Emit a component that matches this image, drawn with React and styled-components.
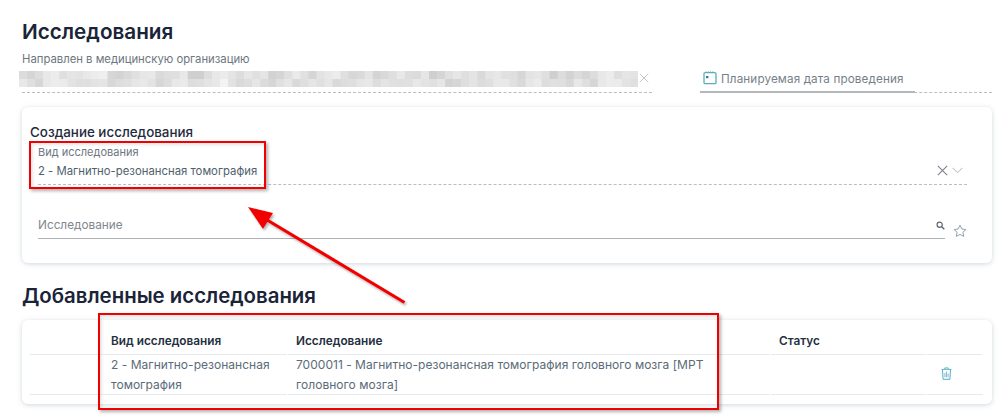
import React from 'react';
import styled, { createGlobalStyle } from 'styled-components';

const GlobalStyle = createGlobalStyle`
    html, body {
        margin: 0;
        padding: 0;
        background: #fff;
    }
    body {
        font-family: Inter, "Noto Sans", "Liberation Sans", sans-serif;
        color: #5a6b78;
    }
`;

const Page = styled.div`
    position: relative;
    box-sizing: border-box;
    width: 1004px;
    height: 419px;
    padding: 18px 12px 0 22px;
    overflow: hidden;
`;

const PageTitle = styled.h1`
    margin: 0;
    height: 27px;
    font-size: 20.7px;
    line-height: 27px;
    font-weight: 600;
    color: #1a2438;
`;

const TopRow = styled.div`
    display: flex;
    margin-top: 7px;
    height: 41px;
`;

const OrgField = styled.div`
    position: relative;
    width: 630px;
    height: 41px;
    border-bottom: 1px dashed #b9bec2;
    box-sizing: border-box;
`;

const SmallLabel = styled.div`
    font-size: ${({ $size }) => $size || 11}px;
    line-height: 14px;
    color: #6d7680;
`;

const Mosaic = styled.svg`
    display: block;
    margin: 5px 0 0 -3px;
`;

const ClearSlot = styled.span`
    position: absolute;
    right: 3px;
    top: 21px;
    display: flex;
`;

const DateField = styled.div`
    position: relative;
    box-sizing: border-box;
    margin-left: 48px;
    width: 292px;
    height: 41px;
    padding: 20px 0 0 3px;
    display: flex;
    align-items: flex-start;
    gap: 4px;
    border-bottom: 1px dashed #b9bec2;
    font-size: 11.7px;
    line-height: 14px;
    letter-spacing: 0.12px;
    color: #767f89;
`;

const DateUnderline = styled.span`
    position: absolute;
    left: 0;
    bottom: -1px;
    width: 215px;
    height: 2px;
    background: #b5b8ba;
`;

const Card = styled.section`
    box-sizing: border-box;
    width: 970px;
    background: #fff;
    border-radius: 6px;
    box-shadow: 0 1px 5px rgba(120, 140, 160, 0.35);
`;

const CreateCard = styled(Card)`
    height: 156px;
    margin-top: 14px;
    padding: 17px 25px 0 8px;
`;

const CardTitle = styled.h2`
    margin: 0;
    font-size: 13.4px;
    line-height: 17px;
    font-weight: 500;
    color: #1f2a3c;
`;

const KindField = styled.div`
    box-sizing: border-box;
    position: relative;
    height: 40px;
    margin: 4px 0 0 8px;
    border-bottom: 1px dashed #b9bec2;
`;

const FieldValue = styled.div`
    margin-top: 5px;
    font-size: 11.3px;
    line-height: 15px;
    letter-spacing: 0.02px;
    color: #4e616d;
`;

const KindIcons = styled.div`
    position: absolute;
    right: 4px;
    top: 20px;
    display: flex;
    align-items: center;
    gap: 4px;
`;

const SearchRow = styled.div`
    display: flex;
    align-items: flex-end;
    margin: 30px 0 0 8px;
`;

const SearchField = styled.div`
    box-sizing: border-box;
    position: relative;
    width: 907px;
    height: 24px;
    padding-top: 3px;
    border-bottom: 1.5px solid #adb1b4;
    font-size: 11.8px;
    line-height: 15px;
    color: #80878e;
`;

const SearchSlot = styled.span`
    position: absolute;
    right: 0;
    top: 6px;
    display: flex;
`;

const StarSlot = styled.span`
    display: flex;
    margin: 0 0 1px 8px;
`;

const SectionTitle = styled.h2`
    margin: 20px 0 0;
    height: 26px;
    font-size: 20.4px;
    line-height: 26px;
    font-weight: 600;
    color: #1a2438;
`;

const TableCard = styled(Card)`
    height: 84px;
    margin-top: 11px;
    padding: 0 9px 0 8px;
`;

const Grid = styled.div`
    display: grid;
    grid-template-columns: 73px 185px 483px 156px 56px;
`;

const HeadCell = styled.div`
    box-sizing: border-box;
    height: 35px;
    padding: 14px 8px 0;
    font-size: 11.8px;
    line-height: 15px;
    font-weight: 600;
    color: #252f40;
    border-bottom: 1px solid #e6eaed;
    margin-right: 1px;
`;

const BodyCell = styled.div`
    box-sizing: border-box;
    height: 40px;
    padding: 0 8px;
    font-size: 12px;
    line-height: 20px;
    letter-spacing: 0.02px;
    color: #5a6b78;
    border-bottom: 1px solid #e6eaed;
    margin-right: 1px;
`;

const ActionCell = styled(BodyCell)`
    display: flex;
    align-items: center;
    justify-content: flex-start;
    padding: 0 0 3px 14px;
    margin-right: 0;
`;

const Highlight = styled.div`
    position: absolute;
    box-sizing: border-box;
    left: ${({ $x }) => $x}px;
    top: ${({ $y }) => $y}px;
    width: ${({ $w }) => $w}px;
    height: ${({ $h }) => $h}px;
    border: 2px solid #f00000;
    box-shadow: 2px 2px 3px rgba(60, 60, 60, 0.4), inset 2px 2px 3px rgba(60, 60, 60, 0.12);
    pointer-events: none;
`;

const ArrowOverlay = styled.svg`
    position: absolute;
    left: 230px;
    top: 195px;
    pointer-events: none;
`;

const mosaicRows = [
    'dcd5dde8ecdfe5e3e8ecefd6d3d9e0e6e8dadedfe8cfcfdde8ebe4dde6e0e5d2d5dfeae0d5e3e8ecdfd7dae4d4d9dfe8dddbe6cfd5e0e6dfe4d9e4e7e0dfd6e3e6dfcfdcd3',
    'e8dfd6e8ecebe3dfdfe3e5d8dde0e6e8e3d6dde8eadddfe4e8f3e2d9dde6dbd6e0e6d9dfe5e0e6d9dddfe6e8dde4e0dfe0e8e3e0e6d3d6dee4dcdfe8e8e0d9e6ebdde0dfd8',
];

function MosaicBlock() {
    const cell = 8.04;
    const cols = 77;
    const cells = [];
    mosaicRows.forEach((row, r) => {
        for (let i = 0; i < cols; i++) {
            const hex = row.substr((i * 2) % row.length, 2);
            cells.push(
                <rect key={`${r}-${i}`} x={i * cell} y={r * 8} width={cell + 0.5} height={8.5} fill={`#${hex}${hex}${hex}`} />
            );
        }
    });
    return (
        <Mosaic width="619" height="16" viewBox="0 0 619 16">
            {cells}
        </Mosaic>
    );
}

function CrossIcon({ size = 11, color = '#b9bfc5', width = 1.1 }) {
    return (
        <svg width={size} height={size} viewBox="0 0 11 11" fill="none">
            <path d="M0.8 0.8 10.2 10.2M10.2 0.8 0.8 10.2" stroke={color} strokeWidth={width} />
        </svg>
    );
}

function ChevronIcon() {
    return (
        <svg width="11" height="7" viewBox="0 0 11 7" fill="none">
            <path d="M0.6 0.8 5.5 5.6 10.4 0.8" stroke="#c3c8cc" strokeWidth="1.1" />
        </svg>
    );
}

function CalendarIcon() {
    return (
        <svg width="14" height="14" viewBox="0 0 14 14" fill="none" style={{ flex: 'none', marginTop: -1 }}>
            <rect x="1" y="1.6" width="12" height="11" rx="1.2" stroke="#5fabbb" strokeWidth="1.3" />
            <path d="M2.5 1.2h9" stroke="#5fabbb" strokeWidth="1.2" strokeDasharray="1.2 1" />
            <rect x="3" y="5" width="2.4" height="2.2" fill="#2f7f95" />
        </svg>
    );
}

function SearchIcon() {
    return (
        <svg width="9" height="9" viewBox="0 0 9 9" fill="none">
            <circle cx="3.7" cy="3.7" r="2.6" stroke="#5c6770" strokeWidth="1.2" />
            <path d="M5.7 5.7 8.3 8.3" stroke="#5c6770" strokeWidth="1.5" />
        </svg>
    );
}

function StarIcon() {
    return (
        <svg width="14" height="14" viewBox="0 0 14 14" fill="none">
            <path
                d="M7 1.2 8.8 5 12.9 5.5 9.9 8.3 10.7 12.4 7 10.4 3.3 12.4 4.1 8.3 1.1 5.5 5.2 5Z"
                stroke="#8ea3b5"
                strokeWidth="1"
                strokeLinejoin="round"
            />
        </svg>
    );
}

function TrashIcon() {
    return (
        <svg width="11" height="13" viewBox="0 0 11 13" fill="none">
            <path d="M0.5 2.4h10M3.8 2.2V0.9h3.4v1.3" stroke="#55aec2" strokeWidth="0.9" />
            <path d="M1.5 2.6 2.1 12.3h6.8l.6-9.7" stroke="#55aec2" strokeWidth="1" />
            <path d="M3.9 6v4.3M5.5 4.5v5.8M7.1 6.5v3.8" stroke="#6bb9ca" strokeWidth="0.9" />
        </svg>
    );
}

export default function App() {
    return (
        <Page>
            <GlobalStyle />
            <PageTitle>Исследования</PageTitle>
            <TopRow>
                <OrgField>
                    <SmallLabel $size={11.3}>Направлен в медицинскую организацию</SmallLabel>
                    <MosaicBlock />
                    <ClearSlot>
                        <CrossIcon size={10} color="#c3c8cd" />
                    </ClearSlot>
                </OrgField>
                <DateField>
                    <CalendarIcon />
                    Планируемая дата проведения
                    <DateUnderline />
                </DateField>
            </TopRow>

            <CreateCard>
                <CardTitle>Создание исследования</CardTitle>
                <KindField>
                    <SmallLabel>Вид исследования</SmallLabel>
                    <FieldValue>2 - Магнитно-резонансная томография</FieldValue>
                    <KindIcons>
                        <CrossIcon color="#7b838c" />
                        <ChevronIcon />
                    </KindIcons>
                </KindField>
                <SearchRow>
                    <SearchField>
                        Исследование
                        <SearchSlot>
                            <SearchIcon />
                        </SearchSlot>
                    </SearchField>
                    <StarSlot>
                        <StarIcon />
                    </StarSlot>
                </SearchRow>
            </CreateCard>

            <SectionTitle>Добавленные исследования</SectionTitle>
            <TableCard>
                <Grid>
                    <HeadCell />
                    <HeadCell>Вид исследования</HeadCell>
                    <HeadCell>Исследование</HeadCell>
                    <HeadCell>Статус</HeadCell>
                    <HeadCell />
                    <BodyCell />
                    <BodyCell>2 - Магнитно-резонансная томография</BodyCell>
                    <BodyCell>7000011 - Магнитно-резонансная томография головного мозга [МРТ головного мозга]</BodyCell>
                    <BodyCell />
                    <ActionCell>
                        <TrashIcon />
                    </ActionCell>
                </Grid>
            </TableCard>

            <Highlight $x={29} $y={141} $w={237} $h={48} />
            <Highlight $x={98} $y={313} $w={621} $h={97} />
            <ArrowOverlay width="190" height="120" viewBox="0 0 190 120">
                <defs>
                    <filter id="arrowShadow" x="-10%" y="-10%" width="130%" height="130%">
                        <feDropShadow dx="1.5" dy="2" stdDeviation="1.2" floodColor="#555" floodOpacity="0.45" />
                    </filter>
                </defs>
                <g filter="url(#arrowShadow)">
                    <path d="M174.5 107.5 28 19.5" stroke="#f20000" strokeWidth="3.2" />
                    <path d="M18 12 43 18 33 34Z" fill="#f20000" />
                </g>
            </ArrowOverlay>
        </Page>
    );
}
